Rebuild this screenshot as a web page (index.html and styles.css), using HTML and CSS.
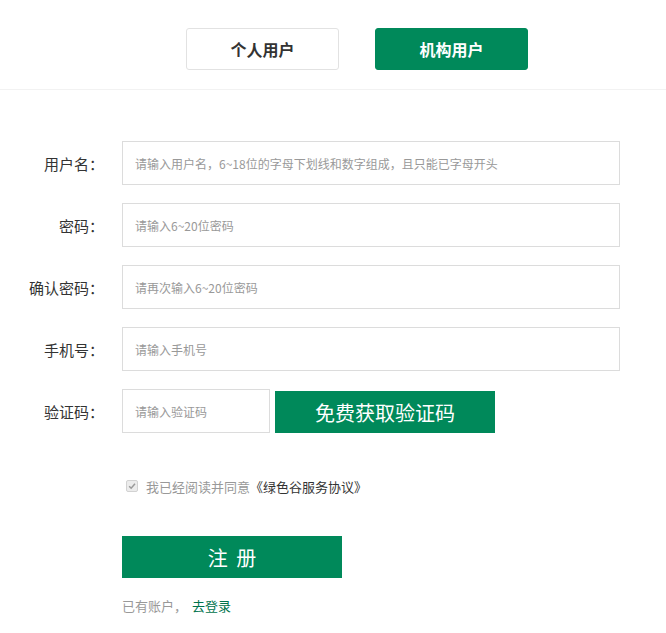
FILE: index.html
```html
<!DOCTYPE html>
<html lang="zh-CN">
<head>
<meta charset="utf-8">
<title>注册</title>
<link rel="stylesheet" href="styles.css">
</head>
<body>
<div class="page">
  <header class="tabs">
    <button class="tab">个人用户</button>
    <button class="tab tab-active">机构用户</button>
  </header>
  <form class="form">
    <div class="row">
      <label class="label">用户名：</label>
      <input class="input" type="text" placeholder="请输入用户名，6~18位的字母下划线和数字组成，且只能已字母开头">
    </div>
    <div class="row">
      <label class="label">密码：</label>
      <input class="input" type="password" placeholder="请输入6~20位密码">
    </div>
    <div class="row">
      <label class="label">确认密码：</label>
      <input class="input" type="password" placeholder="请再次输入6~20位密码">
    </div>
    <div class="row">
      <label class="label">手机号：</label>
      <input class="input" type="text" placeholder="请输入手机号">
    </div>
    <div class="row row-code">
      <label class="label">验证码：</label>
      <input class="input input-code" type="text" placeholder="请输入验证码">
      <button type="button" class="code-btn">免费获取验证码</button>
    </div>
    <div class="agree">
      <span class="check"><svg viewBox="0 0 12 12" width="12" height="12"><path d="M2.6 6.2 L5 8.6 L9.6 3.4" fill="none" stroke="#9a9a9a" stroke-width="1.8"/></svg></span>
      <span class="agree-text">我已经阅读并同意</span><span class="agree-link">《绿色谷服务协议》</span>
    </div>
    <button type="button" class="submit">注 册</button>
    <p class="login">已有账户，<a class="login-link" href="#">去登录</a></p>
  </form>
</div>
</body>
</html>
```

FILE: styles.css
```css
* { box-sizing: border-box; }
html, body { margin: 0; padding: 0; background: #fff; }
body {
  font-family: "Noto Sans CJK SC", "Noto Sans", sans-serif;
  color: #333;
  width: 666px;
  height: 633px;
  overflow: hidden;
}
.tabs {
  display: flex;
  gap: 36px;
  padding: 28px 0 19px 186px;
  border-bottom: 1px solid #f2f2f2;
}
.tab {
  width: 153px;
  height: 42px;
  border: 1px solid #e2e2e2;
  border-radius: 3px;
  background: #fff;
  color: #333;
  font-family: inherit;
  font-size: 16px;
  font-weight: bold;
  padding: 0;
}
.tab-active {
  background: #00895a;
  border-color: #00895a;
  color: #fff;
}
.form {
  padding: 51px 0 0 0;
  display: flex;
  flex-direction: column;
}
.row {
  display: flex;
  align-items: center;
  gap: 18px;
  height: 44px;
  margin-bottom: 18px;
}
.label {
  width: 104px;
  text-align: right;
  font-size: 15px;
  color: #333;
}
.input {
  width: 498px;
  height: 44px;
  border: 1px solid #dcdcdc;
  padding: 0 12px;
  font-family: inherit;
  font-size: 12px;
  color: #333;
  outline: none;
}
.input::placeholder { color: #999; }
.row-code { align-items: flex-end; }
.row-code .label { align-self: center; }
.input-code { width: 148px; }
.code-btn {
  margin-left: -13px;
  width: 220px;
  height: 42px;
  border: 0;
  background: #00895a;
  color: #fff;
  font-family: inherit;
  font-size: 20px;
  padding: 0;
}
.agree {
  display: flex;
  align-items: center;
  margin: 25px 0 0 126px;
  height: 20px;
  font-size: 13px;
}
.check {
  width: 12px;
  height: 12px;
  border: 1px solid #d2d2d2;
  border-radius: 2px;
  background: #ececec;
  display: flex;
  align-items: center;
  justify-content: center;
  margin-right: 8px;
}
.check svg { display: block; width: 10px; height: 10px; }
.agree-text { color: #999; }
.agree-link { color: #333; }
.submit {
  margin: 40px 0 0 122px;
  width: 220px;
  height: 42px;
  border: 0;
  background: #00895a;
  color: #fff;
  font-family: inherit;
  font-size: 20px;
  letter-spacing: 2px;
  padding: 0 0 0 2px;
}
.login {
  margin: 18px 0 0 122px;
  font-size: 13px;
  line-height: 20px;
  color: #999;
}
.login-link {
  margin-left: 5px;
  color: #00734c;
  text-decoration: none;
}
```
